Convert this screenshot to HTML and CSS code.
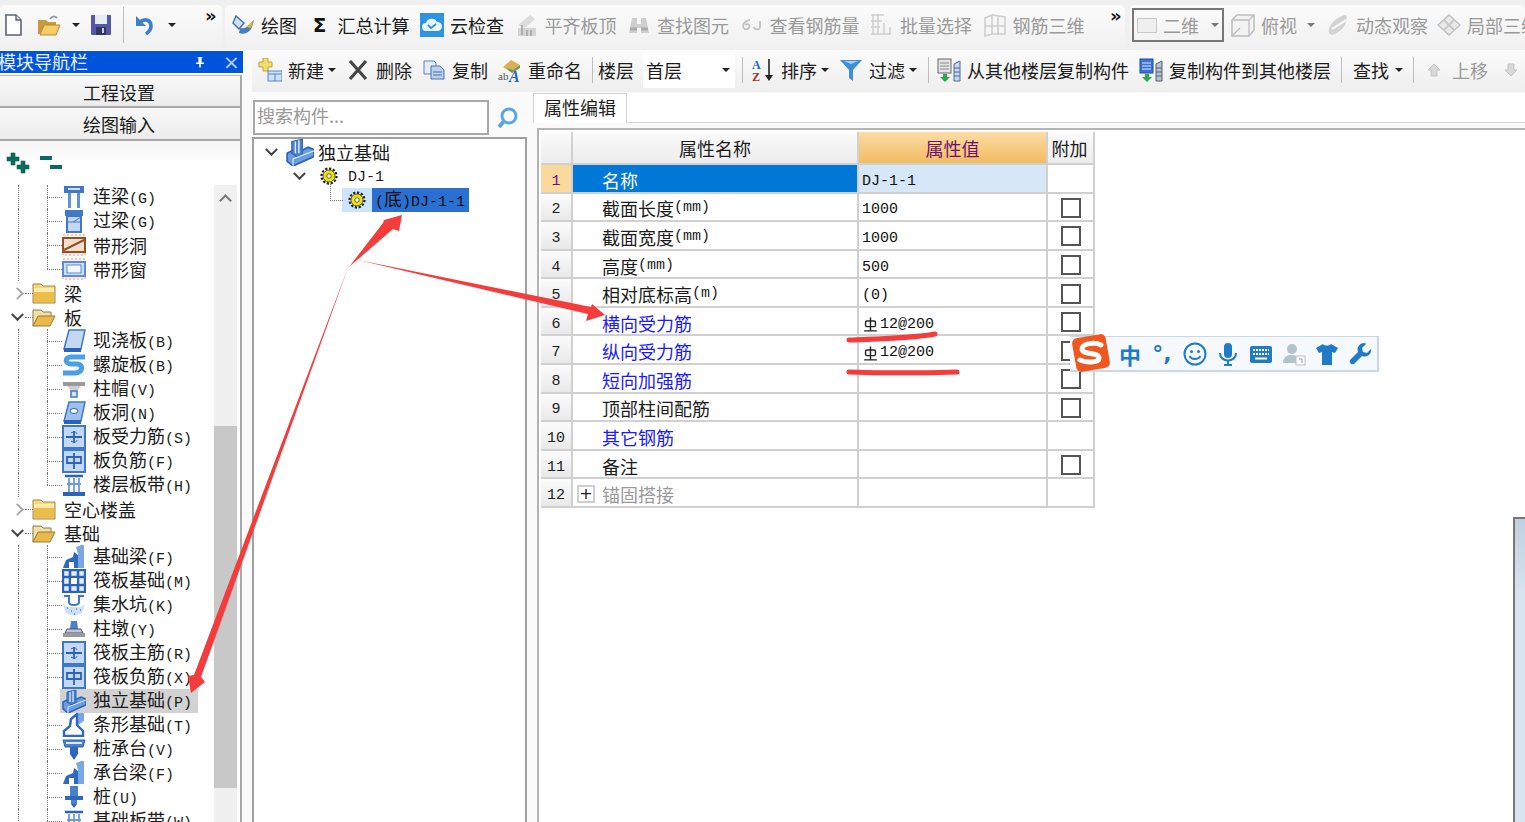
FILE: index.html
```html
<!DOCTYPE html>
<html lang="zh-CN">
<head>
<meta charset="utf-8">
<title>属性编辑</title>
<link rel="stylesheet" href="styles.css">
</head>
<body>
<svg class="defs" aria-hidden="true">
  <symbol id="new" viewBox="0 0 24 24"><path d="M5 2h10l5 5v15H5z" fill="#fff" stroke="#5c6470" stroke-width="1.6"/><path d="M15 2v5h5" fill="#dfe6ee" stroke="#5c6470" stroke-width="1.4"/></symbol>
  <symbol id="open" viewBox="0 0 24 24"><path d="M1 21V7h8l2 2h8v3H7L3 21z" fill="#c99a3a"/><path d="M3 22l4-10h16l-4 10z" fill="#f4cd6a" stroke="#b98a2c"/><path d="M13 6c2-3 5-3 7-1" fill="none" stroke="#8aa0b8" stroke-width="2"/></symbol>
  <symbol id="save" viewBox="0 0 24 24"><rect x="2" y="2" width="20" height="20" rx="1" fill="#5458a8"/><rect x="6" y="2" width="12" height="9" fill="#e8ecf6"/><rect x="7" y="14" width="10" height="8" fill="#33365f"/><rect x="13" y="15" width="2" height="5" fill="#c8cce0"/></symbol>
  <symbol id="undo" viewBox="0 0 24 24"><path d="M7 9c5-4 11-2 11 4 0 3-2 6-5 8" fill="none" stroke="#3f7fc8" stroke-width="3.6"/><path d="M3 3v10h10z" fill="#3f7fc8"/></symbol>
  <symbol id="draw" viewBox="0 0 24 24"><path d="M5 3l8 7-5 6-6-6z" fill="#cfe0f2" stroke="#3c6fb0" stroke-width="1.4"/><path d="M9 15c4 1 8-1 10-4l4-4-2 7c-2 5-7 8-13 6z" fill="#4a7cc4"/><path d="M15 14l8-7-3 8z" fill="#d8b040"/></symbol>
  <symbol id="cloud" viewBox="0 0 24 24"><rect width="24" height="24" fill="#2f93e4"/><path d="M6 18a4 4 0 0 1 0-8 6 6 0 0 1 11-1 4.500 4.500 0 0 1 1 9z" fill="#eaf4fc"/><path d="M8 12l3 3 5-4" fill="none" stroke="#2f93e4" stroke-width="1.800"/></symbol>
  <symbol id="align" viewBox="0 0 24 24"><path d="M3 12L15 2l5 4-10 9z" fill="#dcdcdc"/><path d="M3 15h18v8H3z" fill="#d4d4d4"/><path d="M7 12v10M12 17v6M16 17v6" stroke="#b0b0b0" stroke-width="2"/></symbol>
  <symbol id="bino" viewBox="0 0 24 24"><path d="M5 5h5v6h4V5h5l3 15h-8v-5h-4v5H2z" fill="#cfcfcf"/><path d="M3 16h7M14 16h7" stroke="#aaa" stroke-width="3"/></symbol>
  <symbol id="look" viewBox="0 0 24 24"><path d="M10 7c-5 1-7 3-7 6 0 2 2 4 4 3 2 0 3-2 2-4-1-1-3-1-4 0" fill="none" stroke="#c4c4c4" stroke-width="1.800"/><path d="M20 8v6c0 2-2 3-4 2-1 0-2-1-2-2" fill="none" stroke="#c4c4c4" stroke-width="1.800"/></symbol>
  <symbol id="batch" viewBox="0 0 24 24"><path d="M1 2h13M1 8h11M1 14h9M1 21h19M3 1v21M8 1v21M14 10v12M20 14v8" stroke="#cfcfcf" stroke-width="1.500" fill="none"/></symbol>
  <symbol id="rebar3d" viewBox="0 0 24 24"><path d="M2 5l7-3v19l-7 2zM9 2l13 2v17L9 21M2 13h20M15 3v18" stroke="#cdcdcd" stroke-width="1.500" fill="none"/></symbol>
  <symbol id="box" viewBox="0 0 24 24"><path d="M1 7l5-5h17v15l-5 6H1z" fill="#f3f3f3" stroke="#bdbdbd" stroke-width="1.500"/><path d="M1 7h17v16M18 7l5-5M1 23l8-8" fill="none" stroke="#bdbdbd" stroke-width="1.300"/></symbol>
  <symbol id="orbit" viewBox="0 0 24 24"><path d="M3 20C1 14 10 3 20 2c3 5-2 16-14 20z" fill="#d2d2d2"/><path d="M6 16L22 6" stroke="#f4f4f4" stroke-width="2.500"/></symbol>
  <symbol id="part" viewBox="0 0 24 24"><path d="M1 12L12 2l11 10-11 10z" fill="#eaeaea" stroke="#c0c0c0" stroke-width="1.500"/><path d="M7 7l10 10M17 7L7 17" stroke="#c8c8c8" stroke-width="2"/></symbol>
  <symbol id="plus" viewBox="0 0 24 24"><path d="M5 0h5v4h4v5h-4v4H5V9H1V4h4z" fill="#f2dc6c" stroke="#bfa23a"/><rect x="10" y="13" width="14" height="10" fill="#cfe0f4" stroke="#5a86c0"/><path d="M10 16h14M17 16v7" stroke="#5a86c0"/></symbol>
  <symbol id="cross" viewBox="0 0 24 24"><path d="M4 3l16 18M20 3L4 21" stroke="#454545" stroke-width="3.200"/></symbol>
  <symbol id="copy" viewBox="0 0 24 24"><path d="M2 3h10l2 2v11H2z" fill="#e4ecf6" stroke="#5c82b4"/><path d="M9 8h9l4 4v9H9z" fill="#bcd2ec" stroke="#4a70a8"/><path d="M11 14h9M11 17h9" stroke="#4a70a8"/></symbol>
  <symbol id="rename" viewBox="0 0 24 24"><path d="M5 9l8-7 9 5-9 7z" fill="#d8b050"/><path d="M8 10l7 2 7-5v3l-8 5z" fill="#6a9a58"/><text x="0" y="22" class="ab">ab</text><text x="11" y="24" class="big">A</text></symbol>
  <symbol id="sort" viewBox="0 0 24 24"><text x="1" y="11" class="az a">A</text><text x="1" y="23" class="az z">Z</text><path d="M18 1v19" stroke="#222" stroke-width="1.600"/><path d="M14 17h8l-4 6z" fill="#222"/></symbol>
  <symbol id="filter" viewBox="0 0 24 24"><path d="M1 2h22l-9 10v11l-4-3v-8z" fill="#3f8fd8"/><path d="M5 3h14l-7 3z" fill="#a4d4f6"/></symbol>
  <symbol id="cpin" viewBox="0 0 24 24"><rect x="1" y="1" width="13" height="14" fill="#e4e4e4" stroke="#666"/><path d="M3 5h9M3 8h9M3 11h9" stroke="#888"/><path d="M6 16h4v3h3l-5 5-5-5h3z" fill="#2aa84a"/><path d="M17 6l6-3v20h-6zM17 10h6M17 14h6M17 18h6" fill="#c8d8ea" stroke="#4a6a9a"/></symbol>
  <symbol id="cpout" viewBox="0 0 24 24"><rect x="1" y="1" width="13" height="14" fill="#3a72d8" stroke="#1f4aa0"/><path d="M3 5h9M3 8h9M3 11h9" stroke="#dce8fa"/><path d="M6 16h4v3h3l-5 5-5-5h3z" fill="#2aa84a"/><path d="M17 6l6-3v20h-6zM17 10h6M17 14h6M17 18h6" fill="#b8c2ce" stroke="#55606e"/></symbol>
  <symbol id="up" viewBox="0 0 24 24"><path d="M12 6l6 6h-3v6H9v-6H6z" fill="#d8d8d8" stroke="#c4c4c4"/></symbol>
  <symbol id="down" viewBox="0 0 24 24"><path d="M12 18l6-6h-3V6H9v6H6z" fill="#d8d8d8" stroke="#c4c4c4"/></symbol>
  <symbol id="expand" viewBox="0 0 24 24"><path d="M5 2h4v4h4v4H9v4H5v-4H1V6h4zM15 10h4v4h4v4h-4v4h-4v-4h-4v-4h4z" fill="#0c6a64" stroke="#063" stroke-width=".6"/></symbol>
  <symbol id="collapse" viewBox="0 0 24 24"><path d="M1 5h12v4H1zM11 14h12v4H11z" fill="#0c6a64"/></symbol>
  <symbol id="find" viewBox="0 0 24 24"><circle cx="13" cy="10" r="7" fill="#fff" stroke="#5aa6e4" stroke-width="3"/><path d="M8 15l-5 6" stroke="#5aa6e4" stroke-width="4"/></symbol>
  <symbol id="lian" viewBox="0 0 24 24"><rect x="2" y="1" width="20" height="7" fill="#3f78c8"/><rect x="6" y="3" width="12" height="2" fill="#cfe0f6"/><path d="M6 8h3v15H6zM15 8h3v15h-3z" fill="#5c94dc"/></symbol>
  <symbol id="guo" viewBox="0 0 24 24"><rect x="3" y="1" width="18" height="6" fill="#3f78c8"/><rect x="5" y="7" width="14" height="16" fill="#c4d8f4" stroke="#3f78c8" stroke-width="2"/><path d="M5 13h14M19 8l-8 5" stroke="#3f78c8"/></symbol>
  <symbol id="dong" viewBox="0 0 24 24"><rect x="1" y="2" width="22" height="20" fill="#fdeee8" stroke="#f4c8bc" stroke-width="2" stroke-dasharray="2 2"/><rect x="1" y="5" width="22" height="14" fill="#f0dfcf" stroke="#8e5226" stroke-width="2"/><path d="M2 17L22 7" stroke="#8e5226" stroke-width="2"/></symbol>
  <symbol id="chuang" viewBox="0 0 24 24"><rect x="1" y="2" width="22" height="20" fill="#fdeee8" stroke="#f4c8bc" stroke-width="2" stroke-dasharray="2 2"/><rect x="1" y="5" width="22" height="14" fill="#cfe0f8" stroke="#5a8ad8" stroke-width="2"/><rect x="5" y="8" width="14" height="8" fill="#f4f8fe" stroke="#5a8ad8"/></symbol>
  <symbol id="fclosed" viewBox="0 0 24 24"><path d="M1 3h8l2 2h12v17H1z" fill="#f6d778" stroke="#9c8650"/><path d="M2 7h20v14H2z" fill="#edbd4a"/><path d="M2 7h20v4H2z" fill="#fbeaa8"/></symbol>
  <symbol id="fopen" viewBox="0 0 24 24"><path d="M1 21V5h8l2 2h8v4" fill="#f3e0a4" stroke="#8f7a44"/><path d="M1 21l5-10h17l-5 10z" fill="#eab94c" stroke="#8f7a44"/></symbol>
  <symbol id="xian" viewBox="0 0 24 24"><path d="M7 1h16l-4 19H2z" fill="#c4d8f4" stroke="#3f78c8" stroke-width="1.500"/><path d="M2 19h17v4H2z" fill="#2b62bc"/></symbol>
  <symbol id="luo" viewBox="0 0 24 24"><path d="M23 4H9C2 4 3 11 9 11h6c7 0 6 9-2 9H1" fill="none" stroke="#4aa0e8" stroke-width="5"/></symbol>
  <symbol id="mao" viewBox="0 0 24 24"><path d="M1 5h22v4H1z" fill="#9a9a9a"/><path d="M5 9h14l-4 5H9z" fill="#cfcfcf"/><rect x="9" y="14" width="6" height="6" fill="#cfe0f8" stroke="#3f78c8" stroke-width="1.500"/></symbol>
  <symbol id="bdong" viewBox="0 0 24 24"><path d="M7 1h16l-4 19H2z" fill="#9fc0ee" stroke="#3f78c8" stroke-width="1.500"/><ellipse cx="12" cy="10" rx="4" ry="2.500" fill="#fff" stroke="#2b62bc"/><path d="M2 19h17v4H2z" fill="#2b62bc"/></symbol>
  <symbol id="shou" viewBox="0 0 24 24"><rect x="1" y="1" width="22" height="22" fill="#c4d8f4" stroke="#3f78c8" stroke-width="2"/><path d="M4 12h16M12 6v12" stroke="#2b62bc" stroke-width="1.800"/><path d="M9 8c3-2 6-1 6 1M9 16c3 2 6 1 6-1" fill="none" stroke="#2b62bc"/></symbol>
  <symbol id="fu" viewBox="0 0 24 24"><rect x="1" y="1" width="22" height="22" fill="#c4d8f4" stroke="#3f78c8" stroke-width="2"/><path d="M5 8h14v6H5zM12 4v16" fill="none" stroke="#2b62bc" stroke-width="1.800"/></symbol>
  <symbol id="dai" viewBox="0 0 24 24"><path d="M3 3h18" stroke="#2b62bc" stroke-width="2.500"/><rect x="1" y="19" width="22" height="4" fill="#2b62bc"/><path d="M7 5v14M12 5v14M17 5v14M5 11h14" stroke="#6a9ae0" stroke-width="1.800"/></symbol>
  <symbol id="jliang" viewBox="0 0 24 24"><path d="M14 2l8-3v24h-6V9z" fill="#7aa8e4"/><path d="M1 23l3-8 7-3 1-5 4 3v13h-4v-6H7v6z" fill="#2f68c0"/></symbol>
  <symbol id="fa" viewBox="0 0 24 24"><rect x="1" y="1" width="22" height="22" fill="#e4eefa" stroke="#2b62bc" stroke-width="2.400"/><path d="M1 8h22M1 16h22M8 1v22M16 1v22" stroke="#2b62bc" stroke-width="2.600"/><rect x="9" y="9" width="6" height="6" fill="#fff"/></symbol>
  <symbol id="keng" viewBox="0 0 24 24"><path d="M2 3h5v6c0 2 2 3 5 3s5-1 5-3V3h5" fill="none" stroke="#3f78c8" stroke-width="2"/><path d="M1 11c3 1 3 3 5 3h12c2 0 3-2 5-3l-3 9c-5 3-11 3-16 0z" fill="#cfe0f4"/><path d="M5 15h1M9 18h1M14 16h1M18 17h1M12 21h1" stroke="#4a82cc" stroke-width="1.500"/></symbol>
  <symbol id="dun" viewBox="0 0 24 24"><path d="M9 4h6l1 8H8z" fill="#4d80cc"/><path d="M5 12h14l2 4H3z" fill="#b8c8dc" stroke="#556"/><rect x="1" y="16" width="22" height="4" fill="#9a9a9a"/></symbol>
  <symbol id="du" viewBox="0 0 24 24"><path d="M1 13l6-3 4 2 8-4 5 2v6L6 24l-5-4z" fill="#6a9ce0" stroke="#2b62bc" stroke-width="1.500"/><path d="M5 3l9-2v13l-5 2-4-3z" fill="#4d80cc" stroke="#2b62bc"/><path d="M8 3v10M11 2v11" stroke="#dce8f8" stroke-width="1.300"/><path d="M6 24v-6l18-7" fill="none" stroke="#dce8f8"/></symbol>
  <symbol id="tiao" viewBox="0 0 24 24"><path d="M14 1l8-2v9l-6 4z" fill="#7aa8e4"/><path d="M9 6l6-5v11l6 6v5H2v-5l6-5z" fill="#fff" stroke="#2f68c0" stroke-width="2.400"/></symbol>
  <symbol id="cheng" viewBox="0 0 24 24"><path d="M1 3h22l-2 7H3z" fill="#4d80cc" stroke="#2b62bc"/><path d="M4 6h16" stroke="#dce8f8" stroke-width="2"/><rect x="8" y="10" width="8" height="7" fill="#2f68c0"/><path d="M8 17h8l-4 6z" fill="#2b62bc"/></symbol>
  <symbol id="zhuang" viewBox="0 0 24 24"><rect x="8" y="1" width="8" height="10" fill="#4d80cc"/><path d="M3 11h18v4H3z" fill="#2f68c0"/><rect x="9" y="15" width="6" height="4" fill="#4d80cc"/><path d="M9 19h6l-3 4z" fill="#2b62bc"/></symbol>
  <symbol id="gear" viewBox="0 0 24 24"><circle cx="12" cy="12" r="10" fill="none" stroke="#222" stroke-width="3" stroke-dasharray="3 2.200"/><circle cx="12" cy="12" r="8" fill="#f2e200" stroke="#333"/><circle cx="12" cy="12" r="3" fill="#fff" stroke="#333"/></symbol>
  <symbol id="steel" viewBox="0 0 24 24"><rect x="5" y="7" width="14" height="8" rx="2" fill="none" stroke="#222" stroke-width="2"/><path d="M12 2v18M3 21h18" stroke="#222" stroke-width="2"/></symbol>
</svg>

<div class="app">
  <header class="tb1">
    <div class="seg seg-a">
      <svg class="ic ml1"><use href="#new"/></svg>
      <svg class="ic ml12"><use href="#open"/></svg>
      <i class="caret ml11"></i>
      <svg class="ic ml9"><use href="#save"/></svg>
      <i class="sep sep-tall ml10"></i>
      <svg class="ic ml9"><use href="#undo"/></svg>
      <i class="caret ml11"></i>
      <span class="more ml29">»</span>
    </div>
    <div class="seg seg-b">
      <span class="it"><svg class="ic"><use href="#draw"/></svg>绘图</span>
      <span class="it"><span class="ic sigma">Σ</span>汇总计算</span>
      <span class="it"><svg class="ic"><use href="#cloud"/></svg>云检查</span>
      <span class="it off"><svg class="ic"><use href="#align"/></svg>平齐板顶</span>
      <span class="it off"><svg class="ic"><use href="#bino"/></svg>查找图元</span>
      <span class="it off"><svg class="ic"><use href="#look"/></svg>查看钢筋量</span>
      <span class="it off"><svg class="ic"><use href="#batch"/></svg>批量选择</span>
      <span class="it off"><svg class="ic"><use href="#rebar3d"/></svg>钢筋三维</span>
      <span class="more more-b">»</span>
    </div>
    <div class="seg seg-c">
      <div class="view-combo off"><i class="swatch"></i>二维<i class="caret caret-grey push"></i></div>
      <span class="it off ml7"><svg class="ic"><use href="#box"/></svg>俯视</span>
      <i class="caret caret-grey ml10"></i>
      <span class="it off ml11"><svg class="ic"><use href="#orbit"/></svg>动态观察</span>
      <span class="it off ml9"><svg class="ic"><use href="#part"/></svg>局部三维</span>
    </div>
  </header>

  <div class="body">
    <aside class="nav">
      <div class="nav-title"><span class="nav-name">模块导航栏</span><span class="pin"></span><span class="close">×</span></div>
      <div class="nav-btn nav-btn-first">工程设置</div>
      <div class="nav-btn">绘图输入</div>
      <div class="nav-tools">
        <svg class="ic"><use href="#expand"/></svg>
        <svg class="ic ml9"><use href="#collapse"/></svg>
      </div>
      <div class="nav-main">
        <div class="tree">
          <div class="leaf"><svg class="ic"><use href="#lian"/></svg><span class="key">连梁<b class="m">(G)</b></span></div>
          <div class="leaf"><svg class="ic"><use href="#guo"/></svg><span class="key">过梁<b class="m">(G)</b></span></div>
          <div class="leaf"><svg class="ic"><use href="#dong"/></svg><span>带形洞</span></div>
          <div class="leaf last"><svg class="ic"><use href="#chuang"/></svg><span>带形窗</span></div>
          <div class="folder"><i class="chev chev-r"></i><svg class="ic"><use href="#fclosed"/></svg><span>梁</span></div>
          <div class="folder"><i class="chev"></i><svg class="ic"><use href="#fopen"/></svg><span>板</span></div>
          <div class="leaf"><svg class="ic"><use href="#xian"/></svg><span class="key">现浇板<b class="m">(B)</b></span></div>
          <div class="leaf"><svg class="ic"><use href="#luo"/></svg><span class="key">螺旋板<b class="m">(B)</b></span></div>
          <div class="leaf"><svg class="ic"><use href="#mao"/></svg><span class="key">柱帽<b class="m">(V)</b></span></div>
          <div class="leaf"><svg class="ic"><use href="#bdong"/></svg><span class="key">板洞<b class="m">(N)</b></span></div>
          <div class="leaf"><svg class="ic"><use href="#shou"/></svg><span class="key">板受力筋<b class="m">(S)</b></span></div>
          <div class="leaf"><svg class="ic"><use href="#fu"/></svg><span class="key">板负筋<b class="m">(F)</b></span></div>
          <div class="leaf last"><svg class="ic"><use href="#dai"/></svg><span class="key">楼层板带<b class="m">(H)</b></span></div>
          <div class="folder"><i class="chev chev-r"></i><svg class="ic"><use href="#fclosed"/></svg><span>空心楼盖</span></div>
          <div class="folder"><i class="chev"></i><svg class="ic"><use href="#fopen"/></svg><span>基础</span></div>
          <div class="leaf"><svg class="ic"><use href="#jliang"/></svg><span class="key">基础梁<b class="m">(F)</b></span></div>
          <div class="leaf"><svg class="ic"><use href="#fa"/></svg><span class="key">筏板基础<b class="m">(M)</b></span></div>
          <div class="leaf"><svg class="ic"><use href="#keng"/></svg><span class="key">集水坑<b class="m">(K)</b></span></div>
          <div class="leaf"><svg class="ic"><use href="#dun"/></svg><span class="key">柱墩<b class="m">(Y)</b></span></div>
          <div class="leaf"><svg class="ic"><use href="#shou"/></svg><span class="key">筏板主筋<b class="m">(R)</b></span></div>
          <div class="leaf"><svg class="ic"><use href="#fu"/></svg><span class="key">筏板负筋<b class="m">(X)</b></span></div>
          <div class="leaf active"><svg class="ic"><use href="#du"/></svg><span class="key">独立基础<b class="m">(P)</b></span></div>
          <div class="leaf"><svg class="ic"><use href="#tiao"/></svg><span class="key">条形基础<b class="m">(T)</b></span></div>
          <div class="leaf"><svg class="ic"><use href="#cheng"/></svg><span class="key">桩承台<b class="m">(V)</b></span></div>
          <div class="leaf"><svg class="ic"><use href="#jliang"/></svg><span class="key">承台梁<b class="m">(F)</b></span></div>
          <div class="leaf"><svg class="ic"><use href="#zhuang"/></svg><span class="key">桩<b class="m">(U)</b></span></div>
          <div class="leaf"><svg class="ic"><use href="#dai"/></svg><span class="key">基础板带<b class="m">(W)</b></span></div>
        </div>
        <div class="vscroll"><i class="chev chev-up"></i><div class="thumb"></div></div>
      </div>
    </aside>

    <main class="work">
      <div class="tb2">
        <span class="it"><svg class="ic"><use href="#plus"/></svg>新建</span>
        <i class="caret ml4"></i>
        <span class="it ml10"><svg class="ic"><use href="#cross"/></svg>删除</span>
        <span class="it ml10"><svg class="ic"><use href="#copy"/></svg>复制</span>
        <span class="it ml10"><svg class="ic"><use href="#rename"/></svg>重命名</span>
        <i class="sep ml10"></i>
        <span class="ml5">楼层</span>
        <div class="floor ml9"><span>首层</span><i class="caret push"></i></div>
        <i class="sep ml7"></i>
        <span class="it ml8"><svg class="ic"><use href="#sort"/></svg>排序</span>
        <i class="caret ml4"></i>
        <span class="it ml10"><svg class="ic"><use href="#filter"/></svg>过滤</span>
        <i class="caret ml4"></i>
        <i class="sep ml11"></i>
        <span class="it ml8"><svg class="ic"><use href="#cpin"/></svg>从其他楼层复制构件</span>
        <span class="it ml10"><svg class="ic"><use href="#cpout"/></svg>复制构件到其他楼层</span>
        <i class="sep ml10"></i>
        <span class="ml11">查找</span>
        <i class="caret ml6"></i>
        <i class="sep ml10"></i>
        <span class="it off ml8"><svg class="ic"><use href="#up"/></svg>上移</span>
        <svg class="ic ml11"><use href="#down"/></svg>
      </div>

      <div class="content">
        <section class="mid">
          <div class="search">
            <div class="search-box">搜索构件...</div>
            <svg class="ic search-ic"><use href="#find"/></svg>
          </div>
          <div class="comp-tree">
            <div class="ct-row ct-1"><i class="chev"></i><svg class="ic ct-big"><use href="#du"/></svg><span>独立基础</span></div>
            <div class="ct-row ct-2"><i class="chev"></i><svg class="ic ct-gear"><use href="#gear"/></svg><span class="mono">DJ-1</span></div>
            <div class="ct-row ct-3"><span class="ct-sel-ic"><svg class="ic ct-gear"><use href="#gear"/></svg></span><span class="ct-sel"><b class="m">(</b>底<b class="m">)DJ-1-1</b></span></div>
          </div>
        </section>

        <section class="props">
          <div class="tabs"><div class="tab">属性编辑</div></div>
          <div class="pane">
            <div class="grid">
              <div class="c hd"></div><div class="c hd hd-name">属性名称</div><div class="c hd hd-val">属性值</div><div class="c hd hd-add">附加</div>

              <div class="c rn rn-on">1</div><div class="c name name-on">名称</div><div class="c val val-on">DJ-1-1</div><div class="c"></div>
              <div class="c rn">2</div><div class="c name">截面长度<b class="m">(mm)</b></div><div class="c val">1000</div><div class="c add"><i class="chk"></i></div>
              <div class="c rn">3</div><div class="c name">截面宽度<b class="m">(mm)</b></div><div class="c val">1000</div><div class="c add"><i class="chk"></i></div>
              <div class="c rn">4</div><div class="c name">高度<b class="m">(mm)</b></div><div class="c val">500</div><div class="c add"><i class="chk"></i></div>
              <div class="c rn">5</div><div class="c name">相对底标高<b class="m">(m)</b></div><div class="c val">(0)</div><div class="c add"><i class="chk"></i></div>
              <div class="c rn">6</div><div class="c name link">横向受力筋</div><div class="c val"><svg class="steel"><use href="#steel"/></svg>12@200</div><div class="c add"><i class="chk"></i></div>
              <div class="c rn">7</div><div class="c name link">纵向受力筋</div><div class="c val"><svg class="steel"><use href="#steel"/></svg>12@200</div><div class="c add"><i class="chk"></i></div>
              <div class="c rn">8</div><div class="c name link">短向加强筋</div><div class="c val"></div><div class="c add"><i class="chk"></i></div>
              <div class="c rn">9</div><div class="c name">顶部柱间配筋</div><div class="c val"></div><div class="c add"><i class="chk"></i></div>
              <div class="c rn">10</div><div class="c name link">其它钢筋</div><div class="c val"></div><div class="c"></div>
              <div class="c rn">11</div><div class="c name">备注</div><div class="c val"></div><div class="c add"><i class="chk"></i></div>
              <div class="c rn">12</div><div class="c name name-group"><i class="plusbox">+</i>锚固搭接</div><div class="c val"></div><div class="c"></div>
            </div>
          </div>
        </section>
      </div>
    </main>
  </div>

  <div class="float-pane"></div>

  <div class="ime">
    <svg class="ime-logo" viewBox="0 0 42 42"><rect x="4" y="4" width="34" height="34" rx="5" fill="#f0561e" transform="rotate(-10 21 21)"/><path d="M31 13c-6-3-19-2-19 4 0 6 17 3 17 9 0 5-12 5-19 2" fill="none" stroke="#fff" stroke-width="5" stroke-linecap="round"/></svg>
    <span class="ime-zh">中</span>
    <span class="ime-punc">°,</span>
    <svg class="ime-ic" viewBox="0 0 24 24"><circle cx="12" cy="12" r="10.500" fill="none" stroke="#1f7bc8" stroke-width="2"/><circle cx="8.500" cy="9.500" r="1.500" fill="#1f7bc8"/><circle cx="15.500" cy="9.500" r="1.500" fill="#1f7bc8"/><path d="M6.500 14c2 4 9 4 11 0" fill="none" stroke="#1f7bc8" stroke-width="1.800"/></svg>
    <svg class="ime-ic" viewBox="0 0 24 24"><rect x="8" y="1" width="8" height="15" rx="4" fill="#1f7bc8"/><path d="M4 11c0 10 16 10 16 0M12 19v3M8 23h8" fill="none" stroke="#1f7bc8" stroke-width="2"/></svg>
    <svg class="ime-ic" viewBox="0 0 24 24"><rect x="1" y="4" width="22" height="17" rx="2" fill="#1f7bc8"/><path d="M4 8h16M4 12h16" stroke="#fff" stroke-width="2" stroke-dasharray="2 1"/><path d="M6 16.500h12" stroke="#fff" stroke-width="2"/></svg>
    <svg class="ime-ic" viewBox="0 0 24 24"><circle cx="10" cy="7" r="5" fill="#b4c2cc"/><path d="M1 21c0-11 16-11 18 0z" fill="#b4c2cc"/><rect x="14" y="14" width="9" height="9" fill="#fff" stroke="#b4c2cc"/><path d="M17 17h3v4" stroke="#8a9aa6" fill="none"/></svg>
    <svg class="ime-ic" viewBox="0 0 24 24"><path d="M8 2c1 2 7 2 8 0l7 4-3 5-3-1v13H7V10l-3 1-3-5z" fill="#1f7bc8"/></svg>
    <svg class="ime-ic" viewBox="0 0 24 24"><path d="M16 1a6.500 6.500 0 0 0-6 9L2 18a3 3 0 0 0 4 4l8-8a6.500 6.500 0 0 0 9-7l-4 4-4-1-1-4 4-4c-.6-.4-1.300-1-2-1z" fill="#1f7bc8"/></svg>
  </div>

  <svg class="marks" viewBox="0 0 1525 822">
    <path class="ink" d="M349 265L201 677 205 682 191 693 188 676 194 675z"/>
    <path class="ink" d="M349 267L383 223 384 220 402 215 399 231 393 229z"/>
    <path class="ink" d="M358 260L591 307 592 304 605 315 586 321 588 314z"/>
    <path class="ink-line" d="M849 340C880 339 915 338 935 334"/>
    <path class="ink-line" d="M849 372C880 373 925 373 957 372"/>
  </svg>
</div>
</body>
</html>
```
FILE: styles.css
```css
* { box-sizing: border-box; }
html, body { margin: 0; height: 100%; }
body {
  font-family: "Noto Sans CJK SC", "Noto Sans", sans-serif;
  font-size: 18px;
  line-height: 24px;
  color: #1c1c1c;
  background: #fff;
  overflow: hidden;
}
.defs { display: none; }
.app { position: relative; width: 1525px; height: 822px; overflow: hidden; display: flex; flex-direction: column; background: #fafafa; }

/* shared */
.ic { width: 24px; height: 24px; flex: none; display: block; }
.m { font-family: "Liberation Mono", monospace; font-size: 15px; font-weight: 400; line-height: 0; }
.mono { font-family: "Liberation Mono", monospace; font-size: 15px; padding-top: 4px; }
.it { display: inline-flex; align-items: center; gap: 6px; white-space: nowrap; flex: none; }
.off { color: #9a9a9a; }
.caret { flex: none; display: block; width: 0; height: 0; border: 4px solid transparent; border-top: 4px solid #222; border-bottom: 0; }
.caret-grey { border-top-color: #777; }
.sep { flex: none; display: block; width: 1px; height: 26px; background: #bdbdbd; }
.sep-tall { height: 36px; }
.push { margin-left: auto; }
.ml1 { margin-left: 1px; } .ml4 { margin-left: 4px; } .ml5 { margin-left: 5px; } .ml6 { margin-left: 6px; }
.ml7 { margin-left: 7px; } .ml8 { margin-left: 8px; } .ml9 { margin-left: 9px; } .ml10 { margin-left: 10px; }
.ml11 { margin-left: 11px; } .ml12 { margin-left: 12px; } .ml29 { margin-left: 29px; }
.ab { font: 11px "Liberation Serif", serif; fill: #555; }
.big { font: italic 700 16px "Liberation Serif", serif; fill: #2a66b8; }
.az { font: 700 12px "Liberation Serif", serif; }
.a { fill: #2a66b8; } .z { fill: #9c3a2a; }

/* first toolbar */
.tb1 { flex: none; height: 50px; padding-top: 5px; display: flex; background: #f0f0f0; overflow: hidden; }
.seg { display: flex; align-items: center; flex: none; height: 45px; background: linear-gradient(#fbfbfb, #f0f0f0); border-radius: 5px 5px 0 0; padding-bottom: 5px; }
.seg-a { width: 222px; }
.seg-b { width: 900px; margin-left: 3px; padding-left: 6px; gap: 10.5px; }
.seg-c { width: 395px; margin-left: 5px; padding-left: 2px; }
.more { font: 700 18px/1 "DejaVu Sans", sans-serif; color: #111; align-self: flex-start; margin-top: 2px; }
.more-b { margin-left: 15px; }
.sigma { font: 700 20px/24px "DejaVu Sans", sans-serif; text-align: center; color: #111; }
.view-combo { flex: none; width: 92px; height: 34px; border: 2px solid #777; display: flex; align-items: center; padding: 0 3px 0 3px; gap: 6px; }
.swatch { width: 20px; height: 15px; background: #efefef; border: 1px solid #c8c8c8; flex: none; }

/* body */
.body { flex: 1; min-height: 0; display: flex; }
.nav { flex: none; width: 243px; display: flex; flex-direction: column; padding-top: 1px; background: #fff; }
.nav-title { flex: none; height: 22px; display: flex; align-items: center; background: #0054db; color: #e8f0ff; padding-bottom: 3px; }
.nav-name { margin-left: -2px; flex: 1; }
.pin { width: 8px; height: 11px; margin: 3px 19px 0 0; background: #fff; clip-path: polygon(15% 0, 85% 0, 85% 10%, 70% 10%, 70% 55%, 100% 55%, 100% 68%, 60% 68%, 60% 100%, 40% 100%, 40% 68%, 0 68%, 0 55%, 30% 55%, 30% 10%, 15% 10%, 15% 0); }
.close { width: 14px; margin: 3px 6px 0 0; font: 20px/22px "DejaVu Sans", sans-serif; color: #b8d0f8; text-align: center; }
.nav-btn { flex: none; height: 33px; margin-right: 1px; text-align: center; line-height: 33px; background: linear-gradient(#f8f8f8, #ececec); border-bottom: 2px solid #a8a8a8; border-right: 2px solid #a8a8a8; padding-right: 2px; }
.nav-btn-first { margin-top: 2px; border-top: 1px solid #b8b8b8; }
.nav-tools { flex: none; height: 44px; display: flex; align-items: center; padding: 0 0 0 6px; border-right: 2px solid #a8a8a8; margin-right: 1px; background: linear-gradient(#f4f4f4, #fff 50%); }
.nav-main { flex: 1; min-height: 0; display: flex; margin-right: 1px; border-right: 2px solid #a8a8a8; }
.tree { flex: none; width: 214px; overflow: hidden; }
.leaf, .folder { position: relative; height: 24px; display: flex; align-items: center; white-space: nowrap; }
.leaf { padding-left: 62px; gap: 7px; background-image: repeating-linear-gradient(90deg, #777 0 1px, transparent 1px 2px); background-position: 47px 12px; background-size: 15px 1px; background-repeat: no-repeat; }
.leaf::before { content: ""; position: absolute; left: 47px; top: 0; height: 100%; border-left: 1px dotted #777; }
.leaf::after { content: ""; position: absolute; left: 18px; top: 0; height: 100%; border-left: 1px dotted #777; }
.leaf.last::before { height: 50%; }
.leaf.active { background: #d2d2d2; margin-left: 60px; width: 138px; padding-left: 2px; }
.leaf.active::before { left: -13px; }
.leaf.active::after { left: -42px; }
.key { margin-top: -4px; }
.folder { padding-left: 13px; }
.folder .ic { margin-left: 10px; margin-right: 8px; }
.folder::before { content: ""; position: absolute; left: 25px; top: 12px; width: 8px; border-top: 1px dotted #777; }
.chev { flex: none; display: block; width: 9px; height: 9px; border: solid #444; border-width: 0 2.500px 2.500px 0; transform: rotate(45deg) translate(-2px, -2px); }
.chev-r { border-color: #aaa; transform: rotate(-45deg); }
.chev-up { border-color: #777; transform: rotate(225deg); margin: 11px auto 0; }
.vscroll { flex: none; width: 23px; background: #f0f0f0; }
.thumb { height: 362px; margin-top: 221px; background: #c8c8c8; }

/* work column */
.work { flex: 1; min-width: 0; display: flex; flex-direction: column; padding-left: 9px; background: #fafafa; }
.tb2 { flex: none; height: 42px; display: flex; align-items: center; padding: 0 0 2px 6px; background: linear-gradient(#fbfbfb, #eeeeee); border-radius: 5px 0 0 0; white-space: nowrap; overflow: hidden; }
.floor { flex: none; width: 92px; height: 36px; display: flex; align-items: center; padding: 0 5px 0 3px; background: #fff; }
.content { flex: 1; min-height: 0; display: flex; }
.mid { flex: none; width: 275px; display: flex; flex-direction: column; padding-top: 8px; }
.search { flex: none; height: 35px; display: flex; align-items: center; }
.search-box { width: 236px; height: 35px; margin-left: 1px; border: 2px solid #a8a8a8; background: #fff; color: #999; padding: 1px 0 0 2px; }
.search-ic { margin-left: 7px; }
.comp-tree { flex: 1; margin-top: 2px; border: 2px solid #a0a0a0; border-bottom: 0; background: #fff; padding-top: 1px; }
.ct-row { height: 24px; display: flex; align-items: center; white-space: nowrap; position: relative; }
.ct-1 { padding-left: 13px; }
.ct-big { margin-left: 10px; width: 28px; height: 28px; margin-right: 4px; }
.ct-gear { width: 18px; height: 18px; }
.ct-2 { padding-left: 41px; }
.ct-2 .ct-gear { margin-left: 16px; margin-right: 10px; }
.ct-3 { padding-left: 88px; }
.ct-3::before { content: ""; position: absolute; left: 76px; top: -4px; width: 12px; height: 16px; border-left: 1px dotted #777; border-bottom: 1px dotted #777; }
.ct-sel-ic { width: 30px; height: 24px; background: #cde5fb; display: flex; align-items: center; justify-content: center; }
.ct-sel { height: 24px; width: 97px; padding-left: 3px; background: #2a6fd2; color: #111; line-height: 20px; }
.props { flex: 1; min-width: 0; padding: 1px 0 0 6px; display: flex; flex-direction: column; }
.tabs { flex: none; height: 30px; background: #fff; border-bottom: 1px solid #d4d4d4; }
.tab { width: 94px; height: 30px; padding: 1px 0 0 10px; background: #fff; border: 1px solid #d4d4d4; border-bottom: 0; }
.pane { flex: 1; margin: 5px 0 0 4px; background: #fff; border-left: 2px solid #b4b4b4; border-top: 2px solid #b4b4b4; padding: 2px 0 0 2px; }

/* table */
.grid { display: grid; grid-template-columns: 32px 286px 189px 47px; grid-template-rows: 33px repeat(12, 28.58px); width: 554px; }
.c { display: flex; align-items: center; border-right: 2px solid #d0d0d0; border-bottom: 2px solid #d0d0d0; background: #fff; min-width: 0; white-space: nowrap; }
.hd { background: linear-gradient(#fbfbfb, #ececec); justify-content: center; }
.hd-val { background: linear-gradient(#fcdca6, #f1bc60); color: #6a1274; }
.hd-add { padding-right: 2px; }
.rn { background: linear-gradient(#fbfbfb, #e9e9e9); justify-content: center; font-family: "Liberation Mono", monospace; font-size: 15px; padding: 7px 0 0 0; }
.rn-on { background: #fbd89c; color: #6a1274; }
.name { padding-left: 29px; padding-top: 3px; }
.name-on { background: #0078d7; color: #fff; }
.link { color: #1a1aff; }
.val { padding: 7px 0 0 3px; color: #111; font-family: "Liberation Mono", monospace; font-size: 15px; }
.val-on { background: #d6e8f8; }
.add { justify-content: center; padding-top: 2px; }
.chk { display: block; width: 20px; height: 20px; border: 2px solid #555; background: #fff; }
.steel { width: 17px; height: 17px; margin-right: 1px; flex: none; }
.name-group { padding-left: 4px; color: #9a9a9a; }
.plusbox { width: 18px; height: 18px; margin-right: 7px; border: 2px solid #cfcfcf; color: #222; font: 16px/13px "DejaVu Sans", sans-serif; text-align: center; }

/* overlays */
.float-pane { position: absolute; left: 1513px; top: 517px; width: 14px; height: 305px; border: 2px solid #777; border-bottom: 0; background: linear-gradient(#bfd0e0, #d8e4f0 25%); }
.ime { position: absolute; left: 1070px; top: 336px; width: 309px; height: 36px; padding-left: 49px; display: flex; align-items: center; gap: 9px; background: #f5f9fd; border: solid #c8d8e8; border-width: 1px 2px 2px 0; }
.ime-logo { position: absolute; left: 0; top: -5px; width: 42px; height: 42px; }
.ime-zh { width: 22px; font-weight: 700; font-size: 22px; color: #1f7bc8; text-align: center; }
.ime-punc { width: 24px; font: 700 22px/24px "DejaVu Sans", sans-serif; color: #1f7bc8; text-align: center; }
.ime-ic { width: 24px; height: 24px; flex: none; }
.marks { position: absolute; left: 0; top: 0; width: 1525px; height: 822px; pointer-events: none; }
.ink { fill: #f43c3c; }
.ink-line { fill: none; stroke: #f43c3c; stroke-width: 5; stroke-linecap: round; }
```
